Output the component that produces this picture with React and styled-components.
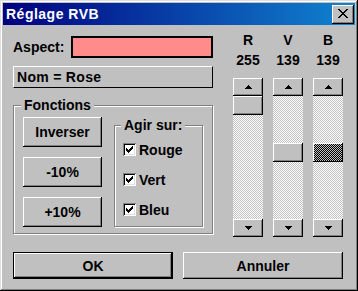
import React from 'react';
import styled, { createGlobalStyle, css } from 'styled-components';

const GlobalStyle = createGlobalStyle`
  html, body {
    margin: 0;
    padding: 0;
    background: #c0c0c0;
  }
  body {
    font-family: "Liberation Sans", Arial, sans-serif;
    font-weight: bold;
    font-size: 14px;
    color: #000;
  }
  * { box-sizing: border-box; }
`;

const raised = css`
  box-shadow: inset -1px -1px #000, inset 1px 1px #fff, inset -2px -2px #808080;
`;

const checker = (a, b) => css`
  background-color: ${b};
  background-image: repeating-conic-gradient(${a} 0% 25%, ${b} 0% 50%);
  background-size: 2px 2px;
`;

const Window = styled.div`
  width: 358px;
  height: 291px;
  padding: 3px;
  background: #c0c0c0;
  box-shadow: inset -1px -1px #000, inset 1px 1px #dfdfdf, inset -2px -2px #808080, inset 2px 2px #fff;
  display: flex;
  flex-direction: column;
`;

const TitleBar = styled.div`
  height: 22px;
  display: flex;
  align-items: center;
  padding: 0 1px 0 3px;
  background: linear-gradient(to right, #000080, #1084d0);
  color: #fff;
  font-size: 14px;
  letter-spacing: 0.5px;
`;

const CloseButton = styled.div`
  margin-left: auto;
  width: 22px;
  height: 19px;
  background: #c0c0c0;
  ${raised};
  display: flex;
  align-items: center;
  justify-content: center;
  padding-bottom: 1px;
`;

const Body = styled.div`
  display: grid;
  grid-template-columns: 200px 110px;
  column-gap: 20px;
  padding: 8px 12px 0 10px;
`;

const LeftCol = styled.div`
  padding-top: 3px;
  display: flex;
  flex-direction: column;
`;

const AspectRow = styled.div`
  height: 22px;
  display: flex;
  align-items: center;
  justify-content: space-between;
`;

const Swatch = styled.div`
  width: 142px;
  height: 22px;
  border: 2px solid #000;
  background: ${p => p.$color};
`;

const NameBox = styled.div`
  margin-top: 8px;
  height: 22px;
  display: flex;
  align-items: center;
  padding-left: 3px;
  border-top: 1px solid #fff;
  border-left: 1px solid #fff;
  border-bottom: 1px solid #000;
  border-right: 1px solid #000;
  letter-spacing: 0.3px;
`;

const GroupBox = styled.fieldset`
  margin: ${p => p.$margin || 0};
  padding: ${p => p.$padding};
  min-width: 0;
  border: 1px solid #808080;
  box-shadow: inset 1px 1px #fff, 1px 1px #fff;
`;

const Legend = styled.legend`
  padding: 0 3px;
  margin-left: -2px;
  line-height: 14px;
  background: #c0c0c0;
`;

const FunctionsRow = styled.div`
  display: flex;
  gap: 12px;
  align-items: flex-start;
`;

const ButtonColumn = styled.div`
  display: flex;
  flex-direction: column;
  gap: 10px;
`;

const Button = styled.div`
  width: ${p => p.$w}px;
  height: ${p => p.$h}px;
  display: flex;
  align-items: center;
  justify-content: center;
  background: #c0c0c0;
  ${raised};
  ${p => p.$default && css`
    box-shadow: inset 0 0 0 1px #000, inset -2px -2px #000, inset 2px 2px #fff, inset -3px -3px #808080;
  `}
`;

const CheckList = styled.div`
  display: flex;
  flex-direction: column;
  gap: 13px;
`;

const CheckRow = styled.div`
  height: 17px;
  display: flex;
  align-items: center;
  gap: 3px;
`;

const CheckBox = styled.div`
  width: 13px;
  height: 13px;
  background: #fff;
  box-shadow: inset 1px 1px #808080, inset -1px -1px #fff, inset 2px 2px #000, inset -2px -2px #dfdfdf;
  display: flex;
  align-items: center;
  justify-content: center;
`;

const RightCol = styled.div`
  display: grid;
  grid-template-columns: repeat(3, 30px);
  column-gap: 10px;
`;

const Channel = styled.div`
  display: flex;
  flex-direction: column;
  align-items: center;
`;

const ChannelLabel = styled.div`
  line-height: 14px;
  margin-top: ${p => p.$top}px;
`;

const ScrollBar = styled.div`
  margin-top: 11px;
  width: 30px;
  display: flex;
  flex-direction: column;
`;

const ArrowButton = styled.div`
  height: 18px;
  background: #c0c0c0;
  ${raised};
  display: flex;
  align-items: center;
  justify-content: center;
`;

const Track = styled.div`
  height: 123px;
  ${checker('#c0c0c0', '#fff')};
`;

const Thumb = styled.div`
  height: 19px;
  ${p => (p.$focused ? checker('#000', '#c0c0c0') : css`background: #c0c0c0;`)};
  ${raised};
  ${p => p.$focused && css`box-shadow: inset -1px -1px #000, inset 1px 1px #fff;`}
`;

const Footer = styled.div`
  grid-column: 1 / -1;
  margin-top: 15px;
  display: flex;
  gap: 10px;
`;

const Arrow = ({ down }) => (
  <svg width="7" height="4" viewBox="0 0 7 4" shapeRendering="crispEdges">
    <path
      d="M3 0h1v1h-1z M2 1h3v1h-3z M1 2h5v1h-5z M0 3h7v1h-7z"
      fill="#000"
      transform={down ? 'rotate(180 3.5 2)' : undefined}
    />
  </svg>
);

const Check = () => (
  <svg width="7" height="7" viewBox="0 0 7 7" shapeRendering="crispEdges">
    <path
      d="M6 0h1v1h-1z M5 1h2v1h-2z M0 2h1v1h-1z M4 2h3v1h-3z M0 3h2v1h-2z M3 3h3v1h-3z M0 4h5v1h-5z M1 5h3v1h-3z M2 6h1v1h-1z"
      fill="#000"
    />
  </svg>
);

const CloseIcon = () => (
  <svg width="10" height="9" viewBox="0 0 10 9" shapeRendering="crispEdges">
    <path
      d="M0 0h2v1h-2z M8 0h2v1h-2z M1 1h2v1h-2z M7 1h2v1h-2z M2 2h2v1h-2z M6 2h2v1h-2z M3 3h4v1h-4z M4 4h2v1h-2z M3 5h4v1h-4z M2 6h2v1h-2z M6 6h2v1h-2z M1 7h2v1h-2z M7 7h2v1h-2z M0 8h2v1h-2z M8 8h2v1h-2z"
      fill="#000"
    />
  </svg>
);

const channels = [
  { name: 'R', value: 255 },
  { name: 'V', value: 139, focused: false },
  { name: 'B', value: 139, focused: true },
];

const TRACK = 123;
const THUMB = 19;

const App = () => {
  const color = `rgb(${channels.map(c => c.value).join(',')})`;
  return (
    <>
      <GlobalStyle />
      <Window>
        <TitleBar>
          Réglage RVB
          <CloseButton><CloseIcon /></CloseButton>
        </TitleBar>
        <Body>
          <LeftCol>
            <AspectRow>
              Aspect:
              <Swatch $color={color} />
            </AspectRow>
            <NameBox>Nom = Rose</NameBox>
            <GroupBox $margin="10px 0 0 0" $padding="5px 9px 6px 9px">
              <Legend>Fonctions</Legend>
              <FunctionsRow>
                <ButtonColumn>
                  <Button $w={79} $h={30}>Inverser</Button>
                  <Button $w={79} $h={30}>-10%</Button>
                  <Button $w={79} $h={30}>+10%</Button>
                </ButtonColumn>
                <GroupBox $margin="1px 0 0 0" $padding="9px 0 8px 8px" style={{ width: 89 }}>
                  <Legend>Agir sur:</Legend>
                  <CheckList>
                    {['Rouge', 'Vert', 'Bleu'].map(label => (
                      <CheckRow key={label}>
                        <CheckBox><Check /></CheckBox>
                        {label}
                      </CheckRow>
                    ))}
                  </CheckList>
                </GroupBox>
              </FunctionsRow>
            </GroupBox>
          </LeftCol>
          <RightCol>
            {channels.map(c => (
              <Channel key={c.name}>
                <ChannelLabel $top={0}>{c.name}</ChannelLabel>
                <ChannelLabel $top={6}>{c.value}</ChannelLabel>
                <ScrollBar>
                  <ArrowButton><Arrow /></ArrowButton>
                  <Track>
                    <Thumb
                      $focused={c.focused}
                      style={{ marginTop: Math.round(((255 - c.value) / 255) * (TRACK - THUMB)) }}
                    />
                  </Track>
                  <ArrowButton><Arrow down /></ArrowButton>
                </ScrollBar>
              </Channel>
            ))}
          </RightCol>
          <Footer>
            <Button $w={160} $h={27} $default>OK</Button>
            <Button $w={160} $h={27}>Annuler</Button>
          </Footer>
        </Body>
      </Window>
    </>
  );
};

export default App;
